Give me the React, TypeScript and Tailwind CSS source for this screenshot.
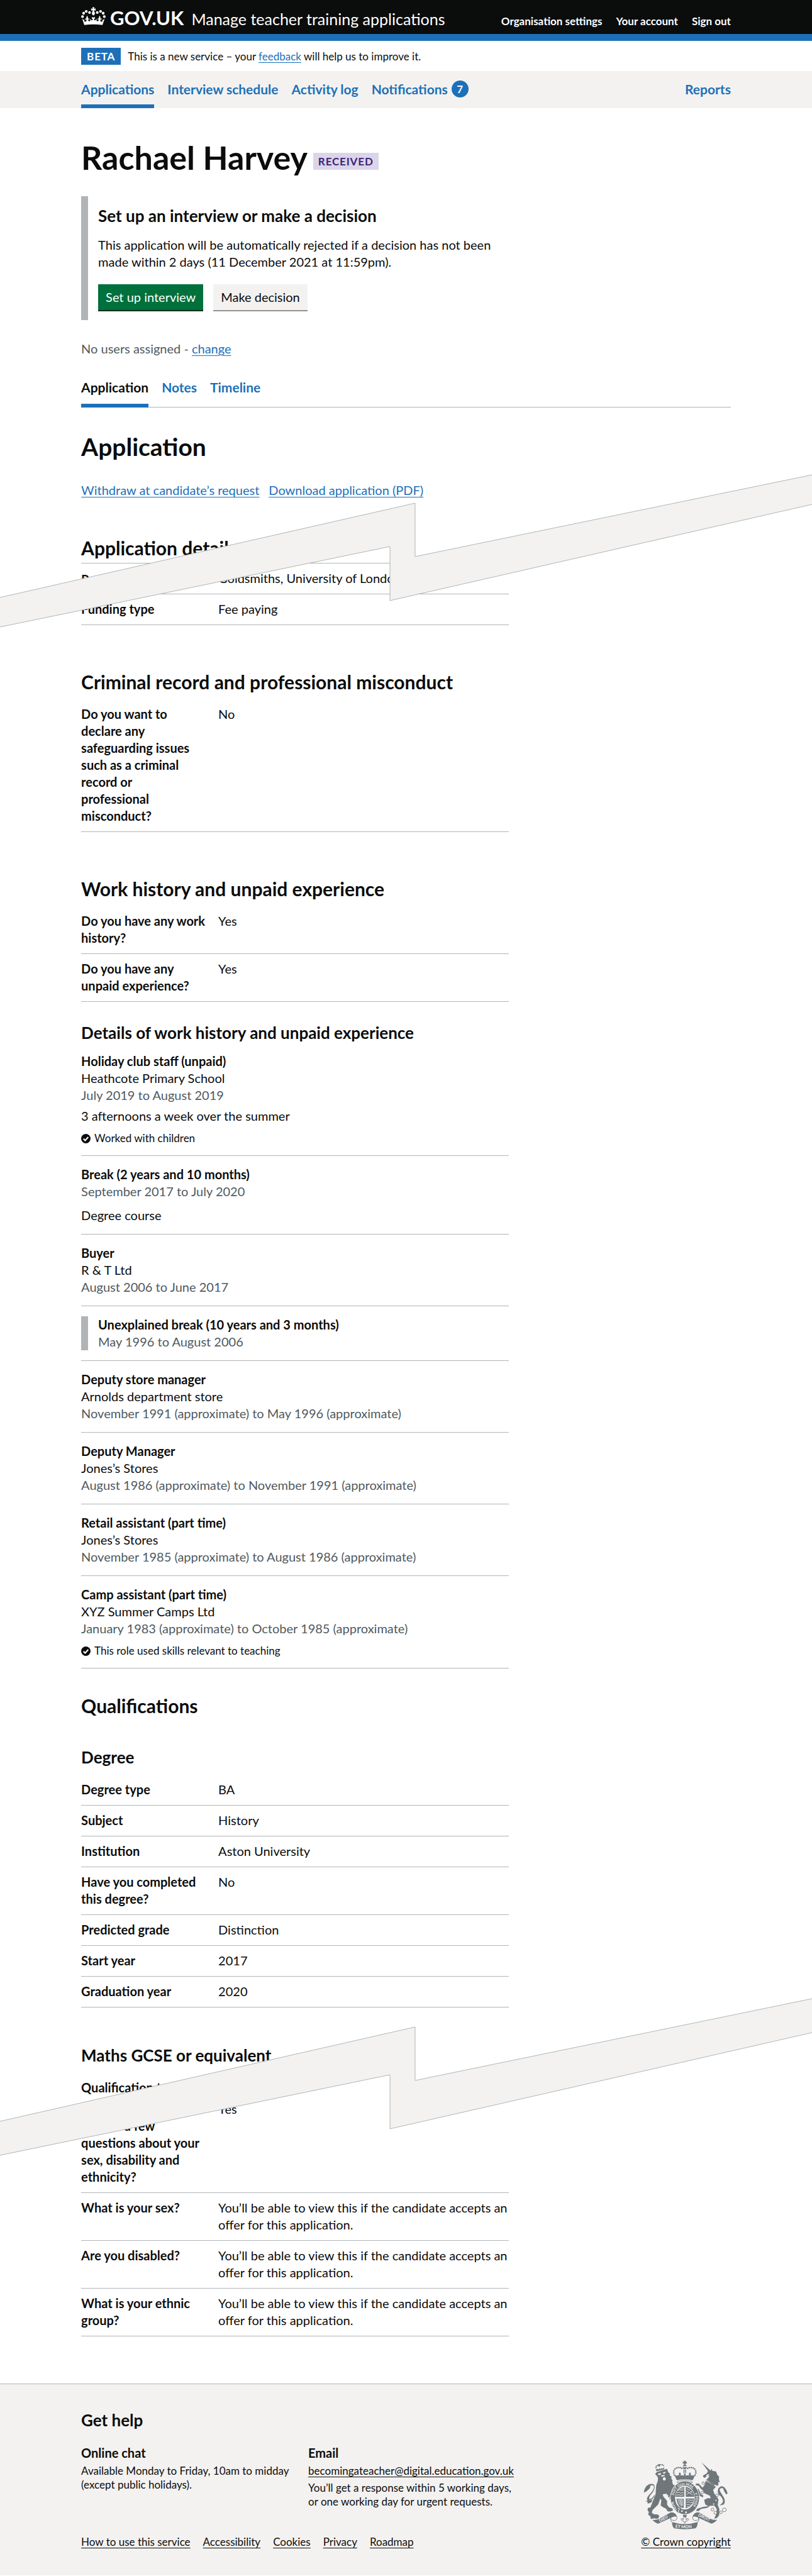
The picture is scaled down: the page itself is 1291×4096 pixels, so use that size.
import React from "react";

const linkBlue = "text-[#1d70b8] underline underline-offset-[3px] decoration-1";

function Crown() {
  return (
    <svg viewBox="30 33 216 160" className="-mb-[2px] h-[29px] w-[39px]" fill="currentColor" aria-hidden="true">
      <circle cx="42" cy="118" r="12" />
      <circle cx="52" cy="88" r="12" />
      <circle cx="75" cy="72" r="12" />
      <circle cx="104" cy="82" r="12" />
      <circle cx="234" cy="118" r="12" />
      <circle cx="224" cy="88" r="12" />
      <circle cx="201" cy="72" r="12" />
      <circle cx="172" cy="82" r="12" />
      <path d="M128 35h20l-5 15 15-5v21l-14-5 2 12q8 12 3 26l-11 10-11-10q-5-14 3-26l2-12-14 5V45l15 5z" />
      <path d="M38 133L58 192Q138 181 218 192L238 133Q232 148 217 148L219 160Q208 166 200 158L199 142L210 146V132L201 136Q204 124 193 110Q182 124 185 136L176 132V146L187 142Q186 158 172 160L164 150L170 140L160 142L157 150H146L144 140L152 134V122L138 126L124 122V134L132 140L130 150H119L116 142L106 140L112 150L104 160Q90 158 89 142L100 146V132L91 136Q94 124 83 110Q72 124 75 136L66 132V146L77 142L76 158Q68 166 57 160L59 148Q44 148 38 133Z" />
    </svg>
  );
}

function TickIcon() {
  return (
    <svg viewBox="0 0 28 28" className="size-[15px] shrink-0" aria-hidden="true">
      <circle cx="14" cy="14" r="14" fill="#0b0c0c" />
      <path d="M7 14.5l5 5L21 9.5" fill="none" stroke="#fff" strokeWidth="4" />
    </svg>
  );
}

function Tear({ className, gap }: { className: string; gap: number }) {
  const points = [
    [0, 196], [660, 46], [660, 131], [1291, 1],
    [1291, 48 + gap], [620, 201 + gap], [620, 115 + gap], [0, 243 + gap],
  ];
  return (
    <svg
      viewBox="0 0 1291 260"
      preserveAspectRatio="none"
      className={"pointer-events-none absolute left-0 h-[260px] w-full overflow-visible " + className}
      aria-hidden="true"
    >
      <polygon points={points.map((p) => p.join(",")).join(" ")} fill="#f3f2f1" />
      <polyline points={points.slice(0, 4).map((p) => p.join(",")).join(" ")} fill="none" stroke="#b1b4b6" />
      <polyline points={points.slice(4).map((p) => p.join(",")).join(" ")} fill="none" stroke="#b1b4b6" />
    </svg>
  );
}

function CoatOfArms() {
  const g = "#6f777b";
  const bg = "#f3f2f1";
  const beads: [number, number][] = [
    [345, 208], [338, 190], [339, 171], [348, 155], [362, 145], [379, 141], [396, 142], [411, 147],
    [529, 208], [536, 190], [535, 171], [526, 155], [512, 145], [495, 141], [478, 142], [463, 147],
  ];
  return (
    <svg viewBox="70 76 754 618" className="h-[110px] w-[135px]" fill={g} role="img" aria-label="Royal coat of arms">
      <defs>
        <path id="motto-top" d="M343 470A104 120 0 1 1 533 470" />
        <path id="motto-right" d="M519 356A94 112 0 0 1 485 509" />
        <path id="motto-low" d="M372 512A104 120 0 0 1 336 432" />
        <path id="scroll-left" d="M212 632L322 568" />
        <path id="scroll-mid" d="M348 676Q437 692 530 676" />
        <path id="scroll-right" d="M552 572L680 634" />
      </defs>

      {/* lion */}
      <path d="M186 182L278 152L290 184L306 196L300 206L322 226L314 234L328 258L324 268L334 296L350 298L330 330L348 360L352 400L330 440L312 436L316 418L300 424L302 402L286 404L290 384L276 388L278 374L240 380L246 400L280 440L278 470L296 496L326 506L332 524L310 534L284 532L270 508L244 496L222 480L228 430L218 420L200 470L150 520L142 544L160 558L196 560L208 572L206 588L186 600L166 594L134 600L130 578L110 560L116 540L104 520L108 502L130 498L156 430L176 380L182 300L196 260L198 232L182 208L172 200Z" />
      <path d="M170 388Q150 440 104 436Q88 412 130 372Q168 334 160 306Q148 294 128 304Q138 330 74 366Q66 350 94 306Q130 276 160 292Q182 322 142 374Q112 404 122 424Q144 422 164 388Z" />
      <path d="M124 434L86 440L104 448L106 464L138 452L150 430Z" />
      <path d="M196 196l30-6-6 16-18 2zM240 186l26-8-4 14-16 4z" fill={bg} />
      <ellipse cx="254" cy="242" rx="13" ry="15" fill={bg} />
      <path d="M224 214q16-8 36-4l-4 8-26 4z" fill={bg} />
      <path d="M184 174L178 150L190 158L196 150L206 160L214 144L222 158L234 144L240 152L254 138L252 158Z" />
      <g>
        <circle cx="180" cy="140" r="6" /><circle cx="184" cy="128" r="6" /><circle cx="196" cy="122" r="6" />
        <circle cx="222" cy="116" r="6" /><circle cx="236" cy="116" r="6" /><circle cx="248" cy="124" r="6" />
        <path d="M198 112l16-4 2 22-12 4z" />
      </g>

      {/* unicorn */}
      <path d="M587 94L656 158L668 168L676 152L684 170L716 176L728 206L744 222L742 246L750 272L736 270L738 298L722 304L704 326L690 340L700 372L738 424L732 476L746 512L744 568L724 592L700 598L720 552L722 510L700 480L660 484L640 500L580 512L562 530L538 528L548 508L604 492L648 486L620 470L610 430L640 414L670 414L660 392L610 370L600 346L580 330L562 304L536 300L534 286L560 282L596 320L612 300L628 252L648 232L658 214L630 220L616 234L602 226L600 212L634 192L644 172Z" />
      <path d="M545 340L560 330L578 376L604 392L598 408L570 392Z" />
      <path d="M738 380Q716 330 762 308Q802 306 820 374L806 380Q784 348 780 326Q758 320 748 336Q750 356 768 380Q812 440 786 470L748 480L776 452Q784 430 758 396Q744 392 738 380Z" />
      <path d="M624 258l92 56 6-12-86-50z" fill={bg} />
      <path d="M636 222l20-18-10-4-20 12z" fill={bg} />
      <path d="M636 260l8-12 8 20 10-10 8 18 10-10 8 20 12-10 6 18-8 10z" />
      <g fill={bg} stroke={g} strokeWidth="5">
        <circle cx="601" cy="280" r="11" /><circle cx="592" cy="364" r="12" /><circle cx="725" cy="389" r="12" />
        <circle cx="716" cy="434" r="8" /><circle cx="695" cy="468" r="8" /><circle cx="685" cy="516" r="13" />
        <circle cx="711" cy="545" r="13" /><circle cx="760" cy="541" r="12" /><circle cx="790" cy="519" r="17" />
      </g>

      {/* garter and shield */}
      <ellipse cx="438" cy="412" rx="132" ry="151" fill={bg} />
      <ellipse cx="438" cy="412" rx="127" ry="146" />
      <ellipse cx="438" cy="410" rx="88" ry="106" fill={bg} />
      <path d="M354 402Q358 330 432 312V402ZM446 312Q516 330 522 402H446ZM446 418H522Q514 486 446 506ZM362 420H428V500Q390 506 374 462Z" />
      <g fill="none" stroke={bg} strokeWidth="5">
        <path d="M374 346l20-8 10 8 22-6M366 366l24-4 8 8 28-6M362 388l26-4 12 6 24-6M394 326l14 8 18-8" />
        <path d="M456 330l20 14 8-10M452 350l30 18 20-20M456 382l20-16 32 20M488 352l16 14" />
        <path d="M454 432l20-4 12 8 28-6M454 452l22-4 12 8 22-6M454 474l18-4 12 8 14-6M456 492l18-4" />
        <path d="M372 430l44-2 2 54M382 434l8 38M394 432l8 50M404 432l6 56" />
      </g>
      <g fontFamily="Lato, sans-serif" fontWeight="700" fontSize="33" fill={bg}>
        <text><textPath href="#motto-top" startOffset="18%">SOIT QUI MAL</textPath></text>
        <text fontSize="31"><textPath href="#motto-right" startOffset="8%">Y PENSE</textPath></text>
        <text><textPath href="#motto-low" startOffset="0">HON</textPath></text>
      </g>
      <path d="M364 500Q390 484 402 504L396 540Q370 548 362 528Z" />
      <path d="M374 504q20-4 12 14-14 12 0 20" fill="none" stroke={bg} strokeWidth="6" />
      <circle cx="412" cy="530" r="8" fill={bg} />
      <circle cx="448" cy="541" r="8" fill={bg} />

      {/* crown */}
      <path d="M366 254Q352 228 346 206L362 214Q372 216 376 206L384 214Q388 204 384 198L393 182L402 198Q396 208 404 214L414 208Q426 220 432 208L426 196H448L442 208Q450 220 460 208L470 214Q478 208 474 198L483 182L492 198Q486 204 492 214L500 206Q504 216 512 214L528 206Q522 228 508 254Q437 238 366 254Z" />
      <path d="M368 276Q368 254 437 252Q506 254 506 276Q437 254 368 276Z" fill={bg} stroke={g} strokeWidth="4" />
      {beads.map(([x, y]) => <circle key={x + "-" + y} cx={x} cy={y} r="7" />)}
      <path d="M427 80h20l-4 12 12-5v20l-12-5 4 12h-20l4-12-12 5V87l12 5zM418 130q2-12 19-14 17 2 19 14zM418 138h38q-4 16-19 16t-19-16zM426 158h8v32h-8zM440 158h8v32h-8z" />

      {/* scrolls */}
      <path d="M148 608Q176 612 210 598L310 542Q352 534 370 584Q352 574 326 584L200 642Q170 634 148 608Z" />
      <path d="M726 608Q698 612 664 598L564 542Q522 534 504 584Q522 574 548 584L674 642Q704 634 726 608Z" />
      <path d="M324 628Q437 664 552 628Q552 672 530 684Q437 700 344 684Q322 668 324 628Z" />
      <g fill="none" stroke={g} strokeWidth="5">
        <path d="M368 584Q366 622 330 612Q306 604 314 584M322 630Q306 610 312 588" />
        <path d="M506 584Q508 622 544 612Q568 604 560 584M552 630Q568 610 562 588" />
      </g>
      <path d="M421 564h33v10l-8 14-8-14-8 14-9-14z" />
      <path d="M437 576l13 22q-4 10 4 10 0-12 12-12 12 12-8 24h-12l-9 20-9-20h-12q-20-12-8-24 12 0 12 12 8 0 4-10z" fill={bg} stroke={g} strokeWidth="5" />
      <g fontFamily="Lato, sans-serif" fontWeight="700" fontSize="36" fill={bg}>
        <text><textPath href="#scroll-left" startOffset="4">DIEU</textPath></text>
        <text fontSize="38"><textPath href="#scroll-mid" startOffset="4">ET MON</textPath></text>
        <text><textPath href="#scroll-right" startOffset="2">DROIT</textPath></text>
      </g>
    </svg>
  );
}

function Row({ label, children, offset = false }: { label: React.ReactNode; children: React.ReactNode; offset?: boolean }) {
  return (
    <div className="grid grid-cols-[218px_1fr] border-b border-[#b1b4b6] pt-[10px] pb-[11px]">
      <dt className={offset ? "pt-1 pr-[19px] font-bold leading-[23px]" : "pr-[19px] font-bold"}>{label}</dt>
      <dd>{children}</dd>
    </div>
  );
}

type Role = {
  title: string;
  place?: string;
  dates: string;
  detail?: string;
  reason?: string;
  note?: string;
  unexplained?: boolean;
};

const roles: Role[] = [
  {
    title: "Holiday club staff (unpaid)",
    place: "Heathcote Primary School",
    dates: "July 2019 to August 2019",
    detail: "3 afternoons a week over the summer",
    note: "Worked with children",
  },
  { title: "Break (2 years and 10 months)", dates: "September 2017 to July 2020", reason: "Degree course" },
  { title: "Buyer", place: "R & T Ltd", dates: "August 2006 to June 2017" },
  { title: "Unexplained break (10 years and 3 months)", dates: "May 1996 to August 2006", unexplained: true },
  {
    title: "Deputy store manager",
    place: "Arnolds department store",
    dates: "November 1991 (approximate) to May 1996 (approximate)",
  },
  { title: "Deputy Manager", place: "Jones’s Stores", dates: "August 1986 (approximate) to November 1991 (approximate)" },
  {
    title: "Retail assistant (part time)",
    place: "Jones’s Stores",
    dates: "November 1985 (approximate) to August 1986 (approximate)",
  },
  {
    title: "Camp assistant (part time)",
    place: "XYZ Summer Camps Ltd",
    dates: "January 1983 (approximate) to October 1985 (approximate)",
    note: "This role used skills relevant to teaching",
  },
];

function RoleEntry({ role }: { role: Role }) {
  return (
    <li className="border-b border-[#b1b4b6] py-4">
      <div className={role.unexplained ? "border-l-[11px] border-[#b1b4b6] pl-4" : ""}>
        <h4 className="font-bold">{role.title}</h4>
        {role.place && <p>{role.place}</p>}
        <p className="text-[#505a5f]">{role.dates}</p>
        {role.detail && <p className="mt-[6px]">{role.detail}</p>}
        {role.reason && <p className="mt-[11px]">{role.reason}</p>}
        {role.note && (
          <p className="mt-[11px] flex items-center gap-[6px] text-[17px] leading-[22px]">
            <TickIcon />
            {role.note}
          </p>
        )}
      </div>
    </li>
  );
}

const sectionHeading = "text-[30px] leading-[36px] font-bold";
const subHeading = "text-[26px] leading-[32px] font-bold";
const hiddenAnswer = "You’ll be able to view this if the candidate accepts an offer for this application.";

export default function App() {
  return (
    <div className="min-h-screen bg-white font-['Lato','Liberation_Sans',sans-serif] text-[20px] leading-[27px] text-[#0b0c0c]">
      <header className="border-b-[11px] border-[#1d70b8] bg-[#0b0c0c] text-white">
        <div className="mx-auto flex h-[54px] w-4/5 items-baseline pt-[11px] leading-[30px]">
          <a href="#" className="flex items-baseline gap-[7px]">
            <Crown />
            <span className="text-[31px] font-bold">GOV.UK</span>
          </a>
          <a href="#" className="ml-3 text-[25px]">Manage teacher training applications</a>
          <nav className="ml-auto flex gap-[22px] text-[17px] font-bold">
            <a href="#">Organisation settings</a>
            <a href="#">Your account</a>
            <a href="#">Sign out</a>
          </nav>
        </div>
      </header>

      <div className="mx-auto flex w-4/5 items-center gap-[11px] pt-[11px] pb-[10px] text-[17px]">
        <strong className="bg-[#1d70b8] px-[9px] tracking-wider text-white">BETA</strong>
        <p>
          This is a new service – your <a href="#" className={linkBlue}>feedback</a> will help us to improve it.
        </p>
      </div>

      <nav className="bg-[#f3f2f1] font-bold text-[#1d70b8]" aria-label="Primary">
        <div className="mx-auto flex w-4/5 gap-[21px] text-[21px]">
          <a href="#" aria-current="page" className="border-b-[6px] border-[#1d70b8] pt-[15px] pb-[11px]">Applications</a>
          <a href="#" className="pt-[15px]">Interview schedule</a>
          <a href="#" className="pt-[15px]">Activity log</a>
          <a href="#" className="flex gap-[6px] pt-[15px]">
            Notifications
            <span className="flex size-[27px] items-center justify-center rounded-full bg-[#1d70b8] text-[17px] text-white">7</span>
          </a>
          <a href="#" className="ml-auto pt-[15px]">Reports</a>
        </div>
      </nav>

      <div className="relative">
        <Tear className="top-[582px]" gap={0} />
        <Tear className="top-[3005px]" gap={7} />
        <main className="mx-auto w-4/5 pt-[51px]">
          <div className="flex items-start gap-[9px]">
            <h1 className="text-[52px] leading-[54px] font-bold">Rachael Harvey</h1>
            <strong className="mt-5 bg-[#dbd5e9] px-2 text-[17px] tracking-wider text-[#3d2375]">RECEIVED</strong>
          </div>

          <section className="mt-[35px] max-w-[680px] border-l-[11px] border-[#b1b4b6] pt-[15px] pb-[14px] pl-4">
            <h2 className={subHeading}>Set up an interview or make a decision</h2>
            <p className="mt-[17px]">
              This application will be automatically rejected if a decision has not been made within 2 days (11 December
              2021 at 11:59pm).
            </p>
            <div className="mt-[22px] flex gap-4">
              <button type="button" className="border-b-2 border-[#002d18] bg-[#00703c] px-3 pt-[7px] pb-[7px] text-white">
                Set up interview
              </button>
              <button type="button" className="border-b-2 border-[#929191] bg-[#f3f2f1] px-3 pt-[7px] pb-[7px]">
                Make decision
              </button>
            </div>
          </section>

          <p className="mt-8 text-[#505a5f]">
            No users assigned - <a href="#" className={linkBlue}>change</a>
          </p>

          <nav className="mt-[34px] flex gap-[21px] border-b border-[#b1b4b6] text-[21px] font-bold text-[#1d70b8]" aria-label="Candidate">
            <a href="#" aria-current="page" className="-mb-px border-b-[6px] border-[#1d70b8] pb-[13px] text-[#0b0c0c]">
              Application
            </a>
            <a href="#">Notes</a>
            <a href="#">Timeline</a>
          </nav>

          <h2 className="mt-10 text-[39px] leading-[44px] font-bold">Application</h2>
          <div className="mt-[34px] flex gap-[15px]">
            <a href="#" className={linkBlue}>Withdraw at candidate’s request</a>
            <a href="#" className={linkBlue}>Download application (PDF)</a>
          </div>

          <div className="max-w-[680px]">
            <section className="mt-[60px]">
              <h3 className={sectionHeading}>Application details</h3>
              <dl className="mt-[6px] border-t border-[#b1b4b6]">
                <Row label="Provider" offset>Goldsmiths, University of London</Row>
                <Row label="Funding type">Fee paying</Row>
              </dl>
            </section>

            <section className="mt-[72px]">
              <h3 className={sectionHeading}>Criminal record and professional misconduct</h3>
              <dl className="mt-[10px]">
                <Row
                  label={
                    <>
                      Do you want to declare any safeguarding issues such as a criminal record or
                      <br />
                      professional misconduct?
                    </>
                  }
                >
                  No
                </Row>
              </dl>
            </section>

            <section className="mt-[72px]">
              <h3 className={sectionHeading}>Work history and unpaid experience</h3>
              <dl className="mt-[10px]">
                <Row label="Do you have any work history?">Yes</Row>
                <Row label="Do you have any unpaid experience?">Yes</Row>
              </dl>
              <h3 className={"mt-[33px] " + subHeading}>Details of work history and unpaid experience</h3>
              <ul>
                {roles.map((role) => (
                  <RoleEntry key={role.title} role={role} />
                ))}
              </ul>
            </section>

            <section className="mt-[41px]">
              <h3 className={sectionHeading}>Qualifications</h3>
              <h4 className={"mt-12 " + subHeading}>Degree</h4>
              <dl className="mt-3">
                <Row label="Degree type">BA</Row>
                <Row label="Subject">History</Row>
                <Row label="Institution">Aston University</Row>
                <Row label="Have you completed this degree?">No</Row>
                <Row label="Predicted grade">Distinction</Row>
                <Row label="Start year">2017</Row>
                <Row label="Graduation year">2020</Row>
              </dl>
              <h4 className={"mt-[60px] " + subHeading}>Maths GCSE or equivalent</h4>
              <dl className="mt-[22px]">
                <dt className="font-bold">Qualification type</dt>
              </dl>
            </section>

            <dl className="-mt-[3px]">
              <Row
                label={
                  <>
                    Do you want to
                    <br />
                    answer a few questions about your sex, disability and ethnicity?
                  </>
                }
              >
                Yes
              </Row>
              <Row label="What is your sex?">{hiddenAnswer}</Row>
              <Row label="Are you disabled?">{hiddenAnswer}</Row>
              <Row label="What is your ethnic group?">{hiddenAnswer}</Row>
            </dl>
          </div>
        </main>
      </div>

      <footer className="mt-[75px] border-t border-[#b1b4b6] bg-[#f3f2f1] pt-[41px] pb-[42px]">
        <div className="mx-auto flex w-4/5 items-end justify-between text-[17px] leading-[22px]">
          <div>
            <h2 className={subHeading}>Get help</h2>
            <div className="mt-[23px] grid grid-cols-[345px_328px] gap-4">
              <div>
                <h3 className="text-[20px] leading-[27px] font-bold">Online chat</h3>
                <p className="mt-1">Available Monday to Friday, 10am to midday (except public holidays).</p>
              </div>
              <div>
                <h3 className="text-[20px] leading-[27px] font-bold">Email</h3>
                <p className="mt-1">
                  <a href="#" className="underline underline-offset-[3px]">becomingateacher@digital.education.gov.uk</a>
                </p>
                <p className="mt-[5px]">You’ll get a response within 5 working days, or one working day for urgent requests.</p>
              </div>
            </div>
            <ul className="mt-[42px] flex gap-5 underline underline-offset-[3px]">
              {["How to use this service", "Accessibility", "Cookies", "Privacy", "Roadmap"].map((item) => (
                <li key={item}>
                  <a href="#">{item}</a>
                </li>
              ))}
            </ul>
          </div>
          <div className="flex flex-col items-center gap-[9px]">
            <CoatOfArms />
            <a href="#" className="underline underline-offset-[3px]">© Crown copyright</a>
          </div>
        </div>
      </footer>
    </div>
  );
}
